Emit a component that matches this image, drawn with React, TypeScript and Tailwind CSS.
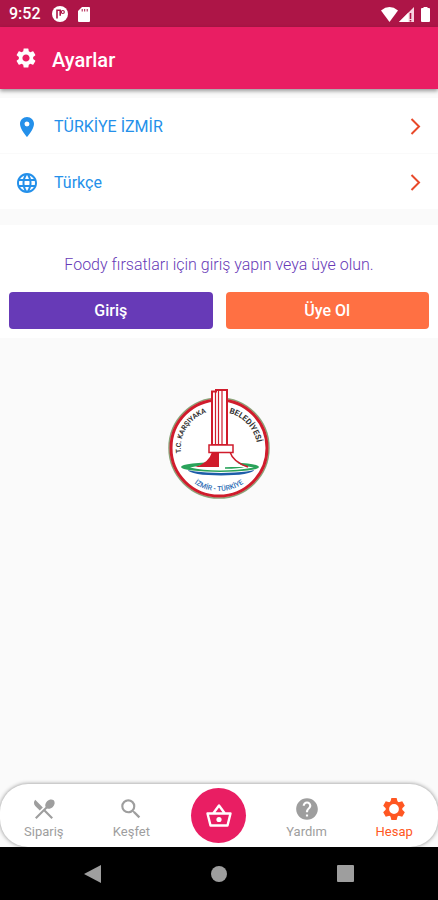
import type { ReactNode } from "react";
import {
  MdHelp,
  MdLanguage,
  MdLocationOn,
  MdRestaurantMenu,
  MdSearch,
  MdSettings,
} from "react-icons/md";

function StatusBar() {
  return (
    <div className="flex h-[27px] items-center justify-between bg-[#ad1547] pt-px pr-2 pl-[9px] text-white">
      <div className="flex items-center">
        <span className="w-[43px] text-base leading-5 font-medium">9:52</span>
        <svg className="mr-[10px] size-4" viewBox="0 0 16 16" aria-hidden="true">
          <circle cx="8" cy="8" r="8" fill="#fff" />
          <path d="M5 3.5v9M5 4.2h3.2v5.6" fill="none" stroke="#ad1547" strokeWidth="1.6" />
          <circle cx="10.8" cy="6" r="1.5" fill="none" stroke="#ad1547" strokeWidth="1.2" />
        </svg>
        <svg className="h-[15px] w-3" viewBox="0 0 12 15" aria-hidden="true">
          <path d="M4 0h7q1 0 1 1v13q0 1-1 1H1q-1 0-1-1V4z" fill="#fff" />
          <path d="M4.2 2v2.5M6.7 2v2.5M9.2 2v2.5" stroke="#ad1547" strokeWidth="1" />
        </svg>
      </div>
      <div className="flex items-center">
        <svg className="h-[15px] w-[17px]" viewBox="0 0 17 15" aria-hidden="true">
          <path d="M0 3.4Q8.5-3.4 17 3.4L8.5 15z" fill="#fff" />
        </svg>
        <svg className="mr-[7px] ml-px size-[15px]" viewBox="0 0 15 15" aria-hidden="true">
          <path d="M0 15 15 0v15z" fill="#f6d5e0" />
          <path d="M0 15 9.5 5.5V15z" fill="#fff" />
          <path d="M11.5 6v6M11.5 13v1.4" stroke="#ad1547" strokeWidth="1.6" />
        </svg>
        <svg className="h-[15px] w-[9px]" viewBox="0 0 9 15" aria-hidden="true">
          <path d="M2.5 0h4v1H8q1 0 1 1V14q0 1-1 1H1q-1 0-1-1V2q0-1 1-1h1.5z" fill="#fff" />
        </svg>
      </div>
    </div>
  );
}

function SettingRow({ icon, label }: { icon: ReactNode; label: string }) {
  return (
    <button
      type="button"
      className="flex h-[55px] w-full items-center bg-white px-[15px] pt-0.5 text-base text-[#2490ea]"
    >
      {icon}
      <span className="ml-[15px] flex-1 text-left">{label}</span>
      <svg
        className="mr-[2px] h-[17px] w-[11px]"
        viewBox="0 0 11 17"
        fill="none"
        stroke="#e8492a"
        strokeWidth="2"
        aria-hidden="true"
      >
        <path d="m1.5 1 7.5 7.5L1.5 16" />
      </svg>
    </button>
  );
}

function Emblem() {
  return (
    <svg
      className="mx-auto mt-[51px] h-[112px] w-[104px]"
      viewBox="0 0 104 112"
      role="img"
      aria-label="T.C. Karşıyaka Belediyesi"
    >
      <circle cx="52" cy="59" r="50" fill="#fff" stroke="#8aa47a" strokeWidth="1.5" />
      <circle cx="52" cy="59" r="48" fill="none" stroke="#d01c2c" strokeWidth="3" />
      <path id="left-arc" d="M14 64A38 38 0 0 1 48 21.5" fill="none" />
      <path id="right-arc" d="M62 24A38 38 0 0 1 90 66" fill="none" />
      <path id="bottom-arc" d="M18 86A44 44 0 0 0 86 86" fill="none" />
      <g className="font-bold" fill="#333" fontSize="7">
        <text>
          <textPath href="#left-arc">T.C. KARŞIYAKA</textPath>
        </text>
        <text fontSize="8">
          <textPath href="#right-arc">BELEDİYESİ</textPath>
        </text>
        <text className="font-medium" fill="#2c6cb4" textAnchor="middle">
          <textPath href="#bottom-arc" startOffset="50%">
            İZMİR - TÜRKİYE
          </textPath>
        </text>
      </g>
      <ellipse cx="54" cy="81" rx="33" ry="5.5" fill="#1d5da8" />
      <ellipse cx="54" cy="79" rx="36" ry="5" fill="#fff" />
      <ellipse cx="53" cy="78" rx="39" ry="5" fill="#2aa35a" />
      <path d="M23 78.5q12-3 30-3t34 3q-16 3-34 3t-30-3z" fill="#fff" />
      <path d="M58 79q14 0 20-2" fill="none" stroke="#2aa35a" strokeWidth="1.5" />
      <path d="M28 78q16-3 17-15h18q1 11 18 15z" fill="#fff" />
      <path d="M28 78q14-4 17-15h7v15z" fill="#d01c2c" />
      <path d="M63 63q3 10 18 15" fill="none" stroke="#d01c2c" strokeWidth="1.5" />
      <path d="M45 56V2.5h4V1h11v55z" fill="#fff" stroke="#d01c2c" strokeWidth="2" />
      <path d="M48.5 2v54M51.5 2v54M55 2v54" stroke="#d01c2c" strokeWidth="1.2" />
      <path d="M42 56h24v7.5H42z" fill="#fff" stroke="#d01c2c" strokeWidth="1.5" />
    </svg>
  );
}

function BasketIcon() {
  return (
    <svg
      className="size-7"
      viewBox="0 0 28 28"
      fill="none"
      stroke="currentColor"
      strokeWidth="2.4"
      strokeLinejoin="round"
      aria-hidden="true"
    >
      <path d="M2.5 11.5h23l-3 12h-17zM8.5 11 14 3.5l5.5 7.5" />
      <circle cx="14" cy="17.5" r="2.6" fill="currentColor" stroke="none" />
    </svg>
  );
}

function GearIcon() {
  return (
    <svg className="size-[26px]" viewBox="-13 -13 26 26" fill="currentColor" aria-hidden="true">
      <circle r="6.6" fill="none" stroke="currentColor" strokeWidth="3.4" />
      {[0, 60, 120, 180, 240, 300].map((angle) => (
        <path key={angle} transform={`rotate(${angle})`} d="M-3.8-6.5-2.6-11h5.2l1.2 4.5z" />
      ))}
    </svg>
  );
}

function NavItem({ icon, label, active = false }: { icon: ReactNode; label: string; active?: boolean }) {
  return (
    <button
      type="button"
      aria-current={active ? "page" : undefined}
      className={`flex flex-1 flex-col items-center gap-px pt-[5px] text-[13px] leading-[18px] ${
        active ? "text-[#ff5722]" : "text-[#9e9e9e]"
      }`}
    >
      {icon}
      {label}
    </button>
  );
}

export default function App() {
  return (
    <div className="flex min-h-screen flex-col bg-[#fafafa] font-[Roboto,sans-serif]">
      <StatusBar />
      <header className="flex h-[62px] items-center bg-[#e91e63] px-[14px] text-white shadow-[0_2px_4px_rgba(0,0,0,0.4)]">
        <MdSettings className="size-6" aria-hidden="true" />
        <h1 className="ml-[14px] pt-1 text-xl font-medium">Ayarlar</h1>
      </header>

      <main className="flex-1">
        <div className="flex flex-col gap-px pt-[9px]">
          <SettingRow icon={<MdLocationOn className="size-6" aria-hidden="true" />} label="TÜRKİYE İZMİR" />
          <SettingRow icon={<MdLanguage className="size-6" aria-hidden="true" />} label="Türkçe" />
        </div>

        <section className="mt-4 bg-white px-[9px] pt-7 pb-[9px]">
          <p className="text-center text-base font-light text-[#673ab7]">
            Foody fırsatları için giriş yapın veya üye olun.
          </p>
          <div className="mt-[15px] flex gap-[13px] text-base font-medium text-white">
            <button type="button" className="h-[37px] flex-1 rounded bg-[#673ab7]">
              Giriş
            </button>
            <button type="button" className="h-[37px] flex-1 rounded bg-[#ff7043]">
              Üye Ol
            </button>
          </div>
        </section>

        <Emblem />
      </main>

      <nav
        aria-label="Ana menü"
        className="flex h-[63px] items-center rounded-[28px] bg-white shadow-[0_0_4px_rgba(0,0,0,0.45)]"
      >
        <NavItem icon={<MdRestaurantMenu className="size-[26px]" aria-hidden="true" />} label="Sipariş" />
        <NavItem icon={<MdSearch className="size-[26px]" aria-hidden="true" />} label="Keşfet" />
        <div className="flex flex-1 justify-center">
          <button
            type="button"
            aria-label="Sepet"
            className="flex size-[55px] items-center justify-center rounded-full bg-[#e91e63] text-white"
          >
            <BasketIcon />
          </button>
        </div>
        <NavItem icon={<MdHelp className="size-[26px]" aria-hidden="true" />} label="Yardım" />
        <NavItem icon={<GearIcon />} label="Hesap" active />
      </nav>

      <div className="flex h-[53px] items-center justify-around bg-black px-[29px]">
        <button type="button" aria-label="Geri">
          <svg className="h-[18px] w-[17px]" viewBox="0 0 17 18" aria-hidden="true">
            <path d="M0 9 17 0v18z" fill="#9e9e9e" />
          </svg>
        </button>
        <button type="button" aria-label="Ana ekran" className="size-4 rounded-full bg-[#9e9e9e]" />
        <button type="button" aria-label="Son uygulamalar" className="size-[17px] rounded-[1px] bg-[#9e9e9e]" />
      </div>
    </div>
  );
}
